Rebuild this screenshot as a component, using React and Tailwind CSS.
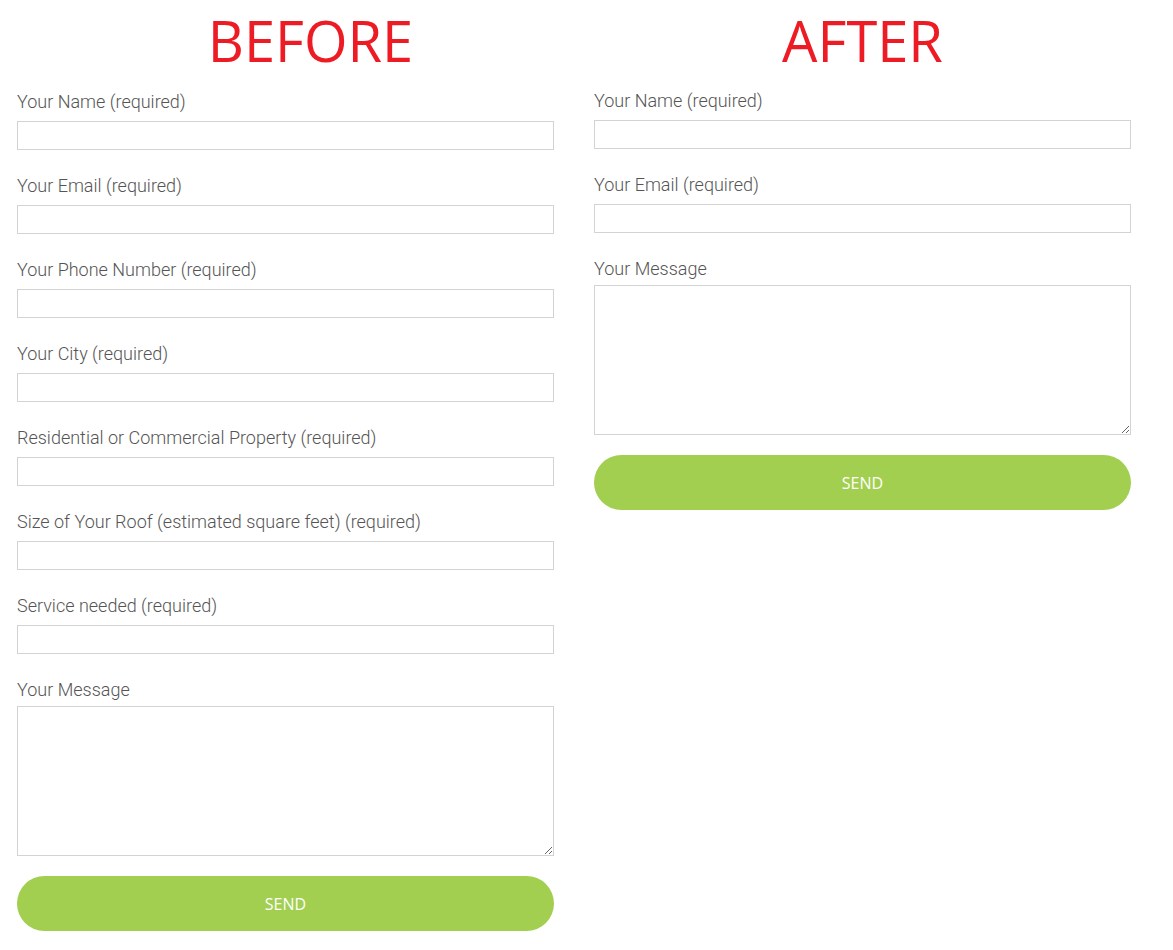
import React from "react";

const label = "block h-6 leading-6 text-[18px] font-light text-[#555555] [font-family:Roboto,'Open_Sans',sans-serif]";
const field = "block w-full h-[29px] border border-[#d3d3d3] bg-white outline-none";

function Field({ text }) {
  return (
    <div className="mb-6">
      <label className={`${label} mb-[7px]`}>{text}</label>
      <input type="text" className={field} />
    </div>
  );
}

function MessageAndSend() {
  return (
    <>
      <label className={`${label} mb-1`}>Your Message</label>
      <textarea className="block w-full h-[150px] border border-[#d3d3d3] bg-white outline-none resize-y" />
      <button
        type="button"
        className="mt-5 block w-full h-[55px] rounded-full bg-[#a2cf4f] text-white text-[16px] [font-family:'Open_Sans',sans-serif]"
      >
        SEND
      </button>
    </>
  );
}

function Heading({ children, className = "" }) {
  return (
    <h2
      className={`mt-3 h-14 leading-[56px] text-[56px] font-normal text-[#ed1c24] text-center [font-family:'Open_Sans',sans-serif] ${className}`}
    >
      {children}
    </h2>
  );
}

export default function App() {
  const before = [
    "Your Name (required)",
    "Your Email (required)",
    "Your Phone Number (required)",
    "Your City (required)",
    "Residential or Commercial Property (required)",
    "Size of Your Roof (estimated square feet) (required)",
    "Service needed (required)",
  ];
  const after = ["Your Name (required)", "Your Email (required)"];

  return (
    <div className="w-[1173px] h-[950px] bg-white pl-[17px] flex gap-10">
      <div className="w-[537px]">
        <Heading className="pl-[50px]">BEFORE</Heading>
        <form className="mt-[22px]">
          {before.map((t) => (
            <Field key={t} text={t} />
          ))}
          <MessageAndSend />
        </form>
      </div>
      <div className="w-[537px]">
        <Heading>AFTER</Heading>
        <form className="mt-[21px]">
          {after.map((t) => (
            <Field key={t} text={t} />
          ))}
          <MessageAndSend />
        </form>
      </div>
    </div>
  );
}
